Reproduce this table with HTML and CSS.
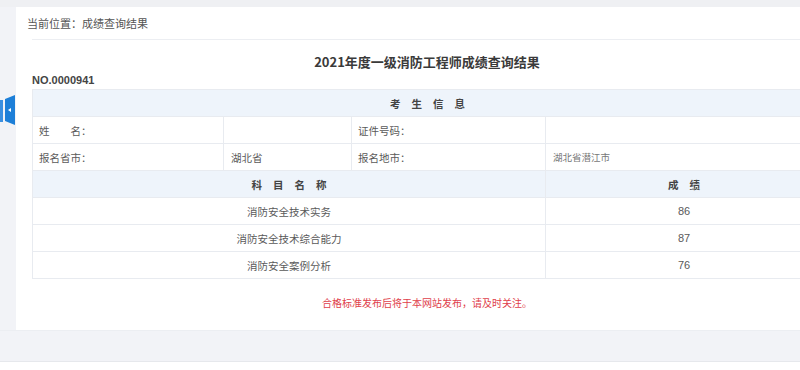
FILE: index.html
```html
<!DOCTYPE html>
<html lang="zh-CN">
<head>
<meta charset="utf-8">
<title>成绩查询结果</title>
<link rel="stylesheet" href="styles.css">
</head>
<body>
<div class="page">
  <div class="topbar"></div>
  <div class="panel">
    <div class="crumb">当前位置：成绩查询结果</div>
    <div class="divider"></div>
    <div class="content">
      <h1 class="title">2021年度一级消防工程师成绩查询结果</h1>
      <div class="no">NO.0000941</div>
      <table class="grid">
        <colgroup>
          <col class="c1"><col class="c2"><col class="c3"><col class="c4">
        </colgroup>
        <tr class="head"><th colspan="4"><span class="sp">考生信息</span></th></tr>
        <tr><td class="lbl">姓　　名：</td><td></td><td class="lbl">证件号码：</td><td></td></tr>
        <tr><td class="lbl">报名省市：</td><td class="val">湖北省</td><td class="lbl">报名地市：</td><td class="val small">湖北省潜江市</td></tr>
        <tr class="head"><th colspan="3"><span class="sp">科目名称</span></th><th><span class="sp">成绩</span></th></tr>
        <tr><td colspan="3" class="ctr">消防安全技术实务</td><td class="ctr num">86</td></tr>
        <tr><td colspan="3" class="ctr">消防安全技术综合能力</td><td class="ctr num">87</td></tr>
        <tr><td colspan="3" class="ctr">消防安全案例分析</td><td class="ctr num">76</td></tr>
      </table>
      <p class="notice">合格标准发布后将于本网站发布，请及时关注。</p>
    </div>
  </div>
  <div class="footer"></div>
  <div class="bottom"></div>
  <div class="sidetab"><span class="arrow"></span></div>
  <div class="sidestrip"></div>
</div>
</body>
</html>
```

FILE: styles.css
```css
html, body {
  margin: 0;
  padding: 0;
  overflow: hidden;
  width: 800px;
  height: 370px;
  background: #f2f3f7;
  font-family: "Noto Sans CJK SC", "Liberation Sans", sans-serif;
  color: #555;
}

.page {
  position: relative;
  width: 840px;
  height: 370px;
}

.topbar {
  height: 7px;
  background: #eff0f3;
}

.panel {
  margin-left: 16px;
  width: 822px;
  background: #fff;
  padding-bottom: 20px;
}

.crumb {
  height: 32px;
  line-height: 32px;
  padding-left: 11px;
  font-size: 11px;
  color: #555;
}

.divider {
  margin-left: 16px;
  height: 1px;
  background: #eceef2;
}

.content {
  padding: 0 0 0 16px;
}

.title {
  margin: 14px 0 0;
  width: 790px;
  text-align: center;
  font-size: 13px;
  line-height: 16px;
  font-weight: bold;
  color: #3a3a3a;
}

.no {
  margin-top: 4px;
  font-family: "Liberation Sans", sans-serif;
  font-weight: bold;
  font-size: 11px;
  line-height: 12px;
  color: #444;
  margin-bottom: 3px;
}

.grid {
  width: 790px;
  border-collapse: collapse;
  table-layout: fixed;
  font-size: 10.5px;
}

.c1 { width: 191px; }
.c2 { width: 128px; }
.c3 { width: 194px; }
.c4 { width: 277px; }

.grid tr {
  height: 27px;
}

.grid td, .grid th {
  border: 1px solid #e8ebf0;
  padding: 0;
  color: #5a5a5a;
}

.grid .head th {
  background: #eef4fb;
  font-weight: bold;
  color: #444;
  text-align: center;
}

.sp {
  letter-spacing: 11px;
  margin-right: -11px;
}

.lbl {
  padding-left: 6px !important;
}

.val {
  padding-left: 7px !important;
}

.small {
  font-size: 9.5px;
  color: #777 !important;
}

.ctr {
  text-align: center;
}

.num {
  font-family: "Liberation Sans", sans-serif;
  font-size: 11px;
}

.notice {
  margin: 17px 0 0;
  width: 790px;
  text-align: center;
  font-size: 10px;
  line-height: 14px;
  color: #e0404b;
}

.footer {
  height: 30px;
  background: #f2f3f7;
  border-top: 1px solid #eceef2;
  border-bottom: 1px solid #e6e8ec;
}

.bottom {
  height: 12px;
  background: #fff;
}

.sidetab {
  position: absolute;
  left: 5px;
  top: 95px;
  width: 10px;
  height: 30px;
  background: #1d7fd8;
  clip-path: polygon(0 4px, 100% 0, 100% 100%, 0 calc(100% - 4px));
}

.arrow {
  position: absolute;
  left: 3px;
  top: 13px;
  width: 0;
  height: 0;
  border-top: 2px solid transparent;
  border-bottom: 2px solid transparent;
  border-right: 3px solid #fff;
}

.sidestrip {
  position: absolute;
  left: 0;
  top: 100px;
  width: 3px;
  height: 22px;
  background: #3b8fe0;
}
```
